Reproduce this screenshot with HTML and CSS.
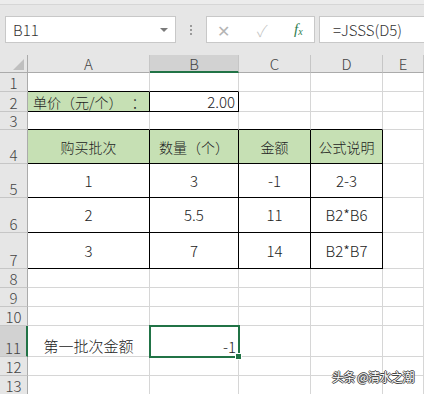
FILE: index.html
```html
<html>
  <head>
    <title>Sheet</title>
    <link rel="stylesheet" href="styles.css">
  </head>
  <body>
    <div class="toolbar">
      <div class="ribbon-edge"></div>
      <div class="bar-row">
        <div class="name-box">
          <span>B11</span>
          <span class="drop"></span>
        </div>
        <div class="grip"><i></i><i></i><i></i></div>
        <div class="fx-box">
          <span class="btn-x">&#x2715;</span>
          <span class="btn-ok">&#x2713;</span>
          <span class="fx">f<sub>x</sub></span>
        </div>
        <div class="formula">=JSSS(D5)</div>
      </div>
    </div>

    <div class="sheet">
      <!-- header row -->
      <div class="corner"><span class="tri"></span></div>
      <div class="hd">A</div>
      <div class="hd on">B</div>
      <div class="hd">C</div>
      <div class="hd">D</div>
      <div class="hd">E</div>

      <div class="rh">1</div>
      <div class="c bb"></div>
      <div class="c bb"></div>
      <div class="c"></div>
      <div class="c"></div>
      <div class="c"></div>

      <div class="rh">2</div>
      <div class="c g bk left">单价（元/个）<span class="colon">：</span></div>
      <div class="c bk right num">2.00</div>
      <div class="c"></div>
      <div class="c"></div>
      <div class="c"></div>

      <div class="rh">3</div>
      <div class="c bb"></div>
      <div class="c bb"></div>
      <div class="c bb"></div>
      <div class="c bb"></div>
      <div class="c"></div>

      <div class="rh">4</div>
      <div class="c g bk mid">购买批次</div>
      <div class="c g bk mid">数量（个）</div>
      <div class="c g bk mid">金额</div>
      <div class="c g bk mid">公式说明</div>
      <div class="c"></div>

      <div class="rh">5</div>
      <div class="c bk mid num">1</div>
      <div class="c bk mid num">3</div>
      <div class="c bk mid num">-1</div>
      <div class="c bk mid num">2-3</div>
      <div class="c"></div>

      <div class="rh">6</div>
      <div class="c bk mid num">2</div>
      <div class="c bk mid num">5.5</div>
      <div class="c bk mid num">11</div>
      <div class="c bk mid num">B2*B6</div>
      <div class="c"></div>

      <div class="rh">7</div>
      <div class="c bk mid num">3</div>
      <div class="c bk mid num">7</div>
      <div class="c bk mid num">14</div>
      <div class="c bk mid num">B2*B7</div>
      <div class="c"></div>

      <div class="rh">8</div>
      <div class="c"></div><div class="c"></div><div class="c"></div><div class="c"></div><div class="c"></div>

      <div class="rh">9</div>
      <div class="c"></div><div class="c"></div><div class="c"></div><div class="c"></div><div class="c"></div>

      <div class="rh">10</div>
      <div class="c"></div><div class="c"></div><div class="c"></div><div class="c"></div><div class="c"></div>

      <div class="rh on">11</div>
      <div class="c big">第一批次金额</div>
      <div class="c sel right num">-1<span class="handle"></span></div>
      <div class="c"></div>
      <div class="c"></div>
      <div class="c"></div>

      <div class="rh">12</div>
      <div class="c"></div><div class="c"></div><div class="c"></div><div class="c"></div><div class="c"></div>

      <div class="rh">13</div>
      <div class="c"></div><div class="c"></div><div class="c"></div><div class="c"></div><div class="c"></div>
    </div>

    <div class="watermark">头条 @清水之潮</div>
  </body>
</html>
```

FILE: styles.css
```css
* {
  box-sizing: border-box;
}
html {
  background-color: #ffffff;
}
body {
  margin: 0;
  width: 424px;
  height: 394px;
  overflow: hidden;
  position: relative;
  font-family: "Noto Sans CJK SC", "Liberation Sans", sans-serif;
  font-weight: 300;
  color: #222;
}

/* formula bar */
.toolbar {
  height: 55px;
  background-color: #e6e6e6;
}
.ribbon-edge {
  height: 5px;
  border-bottom: 1px solid #d6d6d6;
  background-color: #ececec;
}
.bar-row {
  display: flex;
  align-items: center;
  padding: 11px 0 0 5px;
}
.name-box {
  width: 171px;
  height: 27px;
  background: #fff;
  border: 1px solid #c8c8c8;
  display: flex;
  align-items: center;
  justify-content: space-between;
  padding: 0 7px 0 7px;
  font-size: 15px;
  color: #333;
}
.drop {
  width: 0;
  height: 0;
  border-left: 4px solid transparent;
  border-right: 4px solid transparent;
  border-top: 4px solid #7a7a7a;
}
.grip {
  width: 30px;
  display: flex;
  flex-direction: column;
  align-items: center;
  gap: 2px;
}
.grip i {
  width: 2px;
  height: 2px;
  background: #9a9a9a;
}
.fx-box {
  width: 109px;
  height: 27px;
  background: #fff;
  border: 1px solid #c8c8c8;
  display: flex;
  align-items: center;
  padding-left: 10px;
  font-size: 16px;
}
.btn-x {
  color: #b4b4b4;
  width: 40px;
}
.btn-ok {
  color: #c4c4c4;
  width: 37px;
}
.fx {
  font-family: "Liberation Serif", serif;
  font-style: italic;
  font-weight: 400;
  color: #2e7d4f;
  font-size: 15px;
}
.fx sub {
  font-size: 10px;
  vertical-align: -1px;
}
.formula {
  flex: 1;
  height: 27px;
  margin-left: 4px;
  background: #fff;
  border: 1px solid #c8c8c8;
  border-right: none;
  display: flex;
  align-items: center;
  padding-left: 13px;
  font-size: 15px;
  color: #333;
}

/* sheet grid */
.sheet {
  display: grid;
  grid-template-columns: 28px 122px 89px 72px 72px 41px;
  grid-template-rows: 18px 19px 20px 18px 34px 34px 35px 36px 19px 19px 19px 31px 19px 19px;
}
.corner {
  background: #e6e6e6;
  border-right: 1px solid #ababab;
  border-bottom: 1px solid #ababab;
  display: flex;
  justify-content: flex-end;
  align-items: flex-end;
  padding: 0 3px 2px 0;
}
.tri {
  width: 0;
  height: 0;
  border-left: 11px solid transparent;
  border-bottom: 11px solid #bfbfbf;
}
.hd {
  background: #e6e6e6;
  border-right: 1px solid #c6c6c6;
  border-bottom: 1px solid #ababab;
  display: flex;
  align-items: flex-end;
  justify-content: center;
  font-size: 15px;
  line-height: 16px;
  color: #444;
}
.hd.on {
  background: #d2d2d2;
  border-bottom: 2px solid #217346;
  line-height: 15px;
}
.rh {
  background: #e6e6e6;
  border-right: 1px solid #ababab;
  border-bottom: 1px solid #c6c6c6;
  display: flex;
  align-items: flex-end;
  justify-content: center;
  font-size: 15px;
  line-height: 15px;
  padding-bottom: 1px;
  color: #444;
}
.rh.on {
  background: #d2d2d2;
  border-right: 2px solid #217346;
}
.c {
  border-right: 1px solid #d6d6d6;
  border-bottom: 1px solid #d6d6d6;
  display: flex;
  align-items: flex-end;
  justify-content: center;
  padding: 0 3px;
  font-size: 14px;
  line-height: 18px;
  white-space: nowrap;
}
.num {
  font-size: 15px;
}
.g {
  background: #c6e0b4;
}
.bk {
  border-right-color: #000;
  border-bottom-color: #000;
}
.bb {
  border-bottom-color: #000;
}
.mid {
  align-items: center;
}
.left {
  justify-content: flex-start;
  padding-left: 5px;
}
.colon {
  margin-left: 9px;
}
.right {
  justify-content: flex-end;
}
.big {
  font-size: 15px;
  line-height: 20px;
}
.sel {
  position: relative;
  z-index: 1;
  outline: 2px solid #217346;
  outline-offset: -1px;
  padding-right: 2px;
}
.handle {
  position: absolute;
  right: -4px;
  bottom: -4px;
  width: 7px;
  height: 7px;
  background: #217346;
  border: 1px solid #fff;
}

.watermark {
  position: absolute;
  right: 10px;
  bottom: 9px;
  font-size: 12px;
  font-weight: 400;
  letter-spacing: -0.5px;
  color: #fff;
  text-shadow: 1px 0 0 #444, -1px 0 0 #444, 0 1px 0 #444, 0 -1px 0 #444;
}
```
